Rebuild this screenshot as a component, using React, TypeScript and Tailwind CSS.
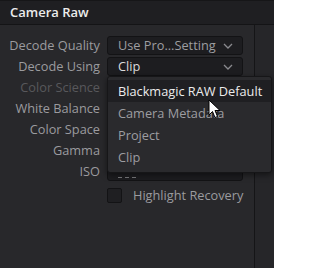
import React from "react";

const font = { fontFamily: '"Open Sans", "Noto Sans", sans-serif' };

function Chevron() {
  return (
    <svg width="10" height="6" viewBox="0 0 10 6" className="shrink-0">
      <path d="M1 1 L5 5 L9 1" fill="none" stroke="#8a8a8e" strokeWidth="1.3" />
    </svg>
  );
}

function Row({ label, value, dim, valueClass, dashes }: { label: string; value?: string; dim?: boolean; valueClass?: string; dashes?: boolean }) {
  return (
    <div className="flex h-[19px] items-center gap-[7px]">
      <div className={`w-[100px] text-right text-[12.75px] leading-none ${dim ? "text-[#58585c]" : "text-[#9b9b9f]"}`}>{label}</div>
      <div className="flex h-[19px] w-[136px] items-center justify-between rounded-[3px] border border-[#131315] bg-[#1d1d20] pl-[10px] pr-[9px]">
        {value !== undefined && <span className={`text-[12.75px] leading-none ${valueClass ?? "text-[#9d9da1]"}`}>{value}</span>}
        {value !== undefined && <Chevron />}
        {dashes && (
          <div className="mt-[12px] flex gap-[3px]">
            <div className="h-[1px] w-[4px] bg-[#7a7a7e]" />
            <div className="h-[1px] w-[4px] bg-[#7a7a7e]" />
            <div className="h-[1px] w-[4px] bg-[#7a7a7e]" />
          </div>
        )}
      </div>
    </div>
  );
}

export default function App() {
  const items = ["Blackmagic RAW Default", "Camera Metadata", "Project", "Clip"];
  return (
    <div className="relative h-[268px] w-[274px] overflow-hidden bg-[#28282b]" style={font}>
      {/* header */}
      <div className="flex h-[25px] items-center border-t border-b border-t-[#161618] border-b-[#141416] bg-[#1f1f22] pl-[10px]">
        <span className="text-[13px] font-semibold leading-none text-[#ececec]">Camera Raw</span>
      </div>

      <div className="flex h-[243px]">
        <div className="w-[255px] border-r border-[#151517] pt-[11px]">
          <div className="flex flex-col gap-[2px]">
            <Row label="Decode Quality" value="Use Pro...Setting" />
            <Row label="Decode Using" value="Clip" valueClass="text-[#dcdcdc]" />
            <Row label="Color Science" dim />
            <Row label="White Balance" />
            <Row label="Color Space" />
            <Row label="Gamma" />
            <Row label="ISO" dashes />
          </div>
          <div className="mt-[7px] flex items-center pl-[107px]">
            <div className="h-[15px] w-[15px] rounded-[2px] border border-[#131315] bg-[#1f1f22]" />
            <span className="ml-[11px] text-[12.75px] leading-none text-[#9b9b9f]">Highlight Recovery</span>
          </div>
        </div>
        <div className="flex-1 bg-[#262629]" />
      </div>

      {/* dropdown menu */}
      <div className="absolute left-[107px] top-[76px] h-[97px] w-[165px] rounded-[3px] border border-[#161618] bg-[#2a2a2d] py-[3px] shadow-[0_2px_6px_rgba(0,0,0,0.5)]">
        {items.map((t, i) => (
          <div
            key={t}
            className={`flex h-[22px] items-center pl-[10px] text-[12.75px] leading-none ${i === 0 ? "bg-[#1f1f22] text-[#ececec]" : "text-[#9d9da1]"}`}
          >
            {t}
          </div>
        ))}
      </div>

      {/* cursor */}
      <svg className="absolute left-[208px] top-[99px]" width="13" height="20" viewBox="0 0 13 20">
        <path d="M1 1 L1 16 L4.5 12.5 L7 18.5 L9.5 17.5 L7 11.5 L12 11.5 Z" fill="#fff" stroke="#000" strokeWidth="1" strokeLinejoin="round" />
      </svg>
    </div>
  );
}
